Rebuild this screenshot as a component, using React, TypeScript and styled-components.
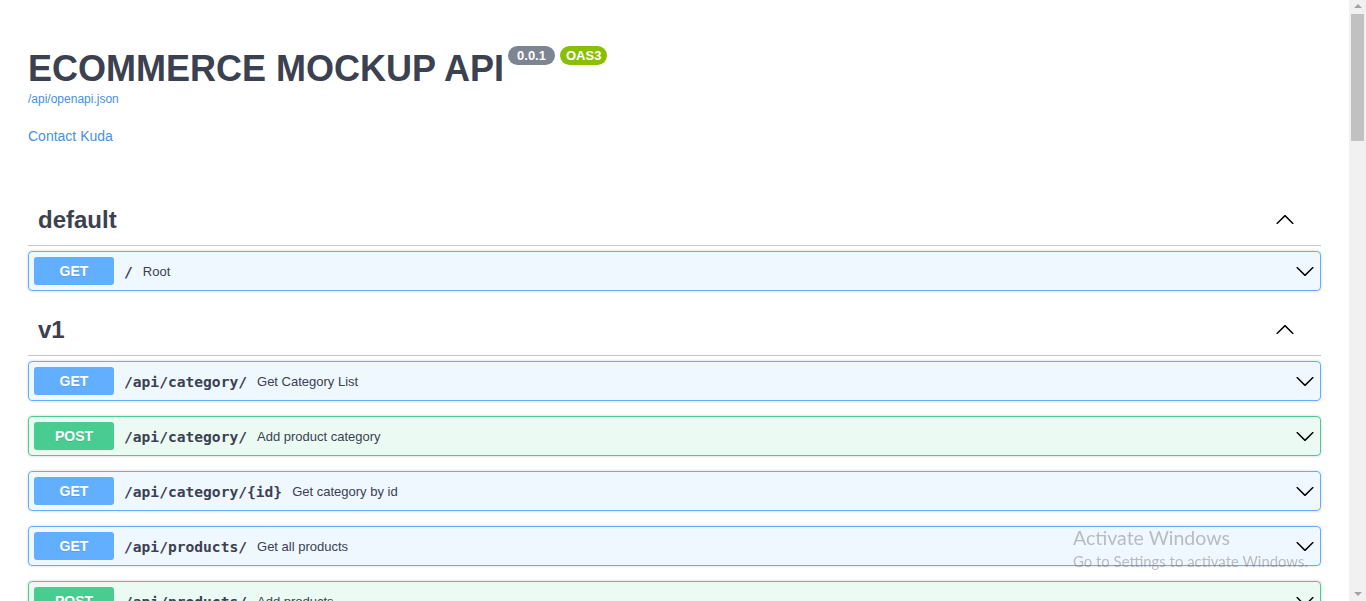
import React from "react";
import styled, { createGlobalStyle } from "styled-components";

const GlobalStyle = createGlobalStyle`
  html, body { height: 100%; }
  body {
    margin: 0;
    overflow: hidden;
    background: #ffffff;
    color: #3b4151;
    font-family: "Liberation Sans", Arial, sans-serif;
  }
`;

const Screen = styled.div`
  display: flex;
  height: 100vh;
  overflow: hidden;
`;

const Main = styled.main`
  flex: 1;
  min-width: 0;
  overflow: hidden;
`;

const Wrapper = styled.div`
  box-sizing: border-box;
  max-width: 1460px;
  margin: 0 auto;
  padding: 0 28px;
`;

/* drawn window scrollbar */
const ScrollRail = styled.div`
  flex: none;
  display: flex;
  flex-direction: column;
  width: 17px;
  background: #f1f1f1;
`;

const ScrollButton = styled.div<{ $down?: boolean }>`
  flex: none;
  display: flex;
  align-items: center;
  justify-content: center;
  height: 14px;
  margin-top: ${(p) => (p.$down ? "auto" : "0")};
  padding-bottom: ${(p) => (p.$down ? "0" : "2px")};
  box-sizing: border-box;

  &::before {
    content: "";
    width: 0;
    height: 0;
    border-left: 4px solid transparent;
    border-right: 4px solid transparent;
    ${(p) =>
      p.$down
        ? "border-top: 4px solid #a3a3a3;"
        : "border-bottom: 4px solid #a3a3a3;"}
  }
`;

const ScrollThumb = styled.div`
  flex: none;
  height: 127px;
  margin: 0 2px;
  background: #c1c1c1;
`;

const Info = styled.div`
  padding-top: 48px;
  margin-bottom: 52px;
`;

const TitleRow = styled.div`
  display: flex;
  align-items: flex-start;
`;

const Title = styled.h2`
  margin: 0;
  font-size: 36px;
  line-height: 41px;
  font-weight: 700;
  color: #3b4151;
`;

const Badge = styled.small<{ $bg: string; $ml: number; $px: number }>`
  margin: -2px 0 0 ${(p) => p.$ml}px;
  padding: 2px ${(p) => p.$px}px;
  border-radius: 57px;
  background: ${(p) => p.$bg};
  color: #ffffff;
  font-size: 13px;
  line-height: 15px;
  font-weight: 700;
`;

const SpecLink = styled.a`
  display: block;
  width: max-content;
  margin-top: 3px;
  font-size: 12px;
  line-height: 14px;
  color: #4990e2;
  text-decoration: none;
`;

const ContactLink = styled.a`
  display: block;
  width: max-content;
  margin-top: 22px;
  font-size: 14px;
  line-height: 16px;
  color: #4990e2;
  text-decoration: none;
`;

const TagSection = styled.section`
  display: flex;
  flex-direction: column;
`;

const TagHeader = styled.h3`
  display: flex;
  align-items: center;
  box-sizing: border-box;
  height: 50px;
  margin: 0 0 5px;
  padding: 0 26px 2px 10px;
  border-bottom: 1px solid rgba(59, 65, 81, 0.3);
  font-size: 24px;
  font-weight: 700;
  color: #3b4151;
`;

const Arrow = styled.svg<{ $up?: boolean }>`
  flex: none;
  width: 20px;
  height: 20px;
  margin-left: auto;
  fill: #000000;
  transform: ${(p) => (p.$up ? "rotate(180deg)" : "none")};
`;

const methodColors: Record<string, string> = {
  GET: "97, 175, 254",
  POST: "73, 204, 144",
};

const Op = styled.div<{ $rgb: string }>`
  display: flex;
  align-items: center;
  box-sizing: border-box;
  height: 40px;
  margin: 0 0 15px;
  padding: 5px;
  border: 1px solid rgb(${(p) => p.$rgb});
  border-radius: 4px;
  background: rgba(${(p) => p.$rgb}, 0.1);
  box-shadow: 0 0 3px rgba(0, 0, 0, 0.19);
`;

const Method = styled.span<{ $rgb: string }>`
  flex: none;
  width: 80px;
  padding: 6px 0;
  border-radius: 3px;
  background: rgb(${(p) => p.$rgb});
  color: #ffffff;
  font-size: 14px;
  line-height: 16px;
  font-weight: 700;
  text-align: center;
  text-shadow: 0 1px 0 rgba(0, 0, 0, 0.1);
`;

const OpPath = styled.span`
  padding: 0 10px;
  font-family: "DejaVu Sans Mono", "Liberation Mono", monospace;
  font-size: 14.6px;
  font-weight: 700;
  color: #3b4151;
`;

const OpSummary = styled.span`
  font-size: 13px;
  color: #3b4151;
`;

const Watermark = styled.div`
  position: fixed;
  left: 1073px;
  top: 526px;
  pointer-events: none;
  font-family: Lato, "Noto Sans", sans-serif;
  color: rgba(100, 100, 100, 0.4);
`;

const WatermarkTitle = styled.div`
  font-size: 19.5px;
  line-height: 24px;
`;

const WatermarkText = styled.div`
  margin-top: 2px;
  font-size: 14.9px;
  line-height: 18px;
`;

const ARROW_D =
  "M17.418 6.109c.272-.268.709-.268.979 0s.271.701 0 .969l-7.908 7.83c-.27.268-.707.268-.979 0l-7.908-7.83c-.27-.268-.27-.701 0-.969.271-.268.709-.268.979 0L10 13.25l7.418-7.141z";

const Chevron = ({ up }: { up?: boolean }) => (
  <Arrow $up={up} viewBox="0 0 20 20" aria-hidden="true">
    <path d={ARROW_D} />
  </Arrow>
);

type Operation = { method: string; path: string; summary: string };

const tags: { name: string; ops: Operation[] }[] = [
  { name: "default", ops: [{ method: "GET", path: "/", summary: "Root" }] },
  {
    name: "v1",
    ops: [
      { method: "GET", path: "/api/category/", summary: "Get Category List" },
      { method: "POST", path: "/api/category/", summary: "Add product category" },
      { method: "GET", path: "/api/category/{id}", summary: "Get category by id" },
      { method: "GET", path: "/api/products/", summary: "Get all products" },
      { method: "POST", path: "/api/products/", summary: "Add products" },
    ],
  },
];

export default function App() {
  return (
    <>
      <GlobalStyle />
      <Screen>
        <Main>
          <Wrapper>
            <Info>
              <TitleRow>
                <Title>ECOMMERCE MOCKUP API</Title>
                <Badge $bg="#7d8492" $ml={4} $px={9}>0.0.1</Badge>
                <Badge $bg="#89bf04" $ml={5} $px={6}>OAS3</Badge>
              </TitleRow>
              <SpecLink href="#">/api/openapi.json</SpecLink>
              <ContactLink href="#">Contact Kuda</ContactLink>
            </Info>
            {tags.map((tag) => (
              <TagSection key={tag.name}>
                <TagHeader>
                  {tag.name}
                  <Chevron up />
                </TagHeader>
                {tag.ops.map((op, i) => {
                  const rgb = methodColors[op.method];
                  return (
                    <Op key={i} $rgb={rgb}>
                      <Method $rgb={rgb}>{op.method}</Method>
                      <OpPath>{op.path}</OpPath>
                      <OpSummary>{op.summary}</OpSummary>
                      <Chevron />
                    </Op>
                  );
                })}
              </TagSection>
            ))}
          </Wrapper>
        </Main>
        <ScrollRail aria-hidden="true">
          <ScrollButton />
          <ScrollThumb />
          <ScrollButton $down />
        </ScrollRail>
      </Screen>
      <Watermark>
        <WatermarkTitle>Activate Windows</WatermarkTitle>
        <WatermarkText>Go to Settings to activate Windows.</WatermarkText>
      </Watermark>
    </>
  );
}
